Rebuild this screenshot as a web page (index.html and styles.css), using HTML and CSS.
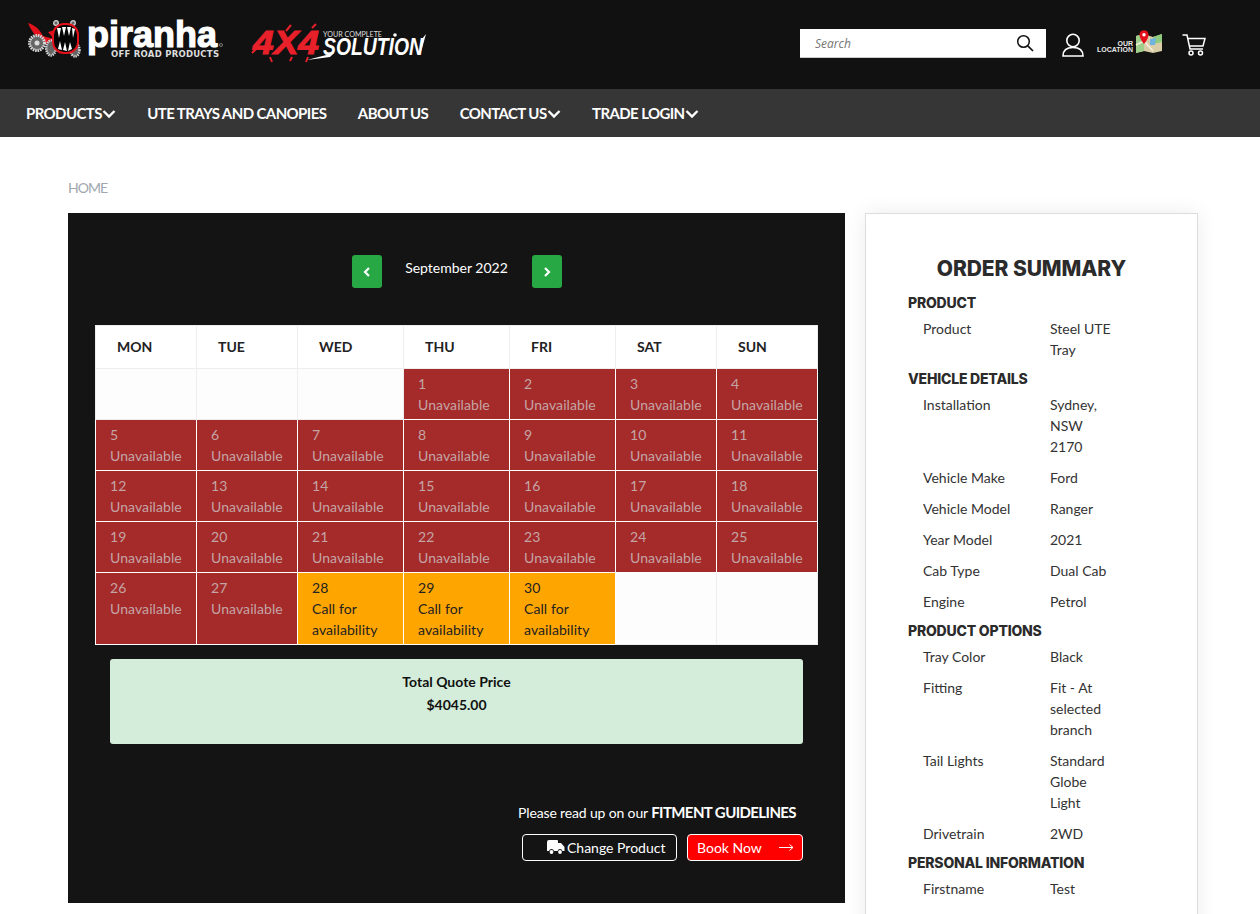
FILE: index.html
```html
<!DOCTYPE html>
<html lang="en">
<head>
<meta charset="utf-8">
<title>Piranha Off Road - Booking</title>
<link rel="stylesheet" href="styles.css">
</head>
<body>
<header class="topbar">
  <div class="logos">
    <svg class="logo-piranha" viewBox="0 -8 200 60" width="200" height="60" aria-label="Piranha Off Road Products">
      <path d="M2 7 C8 9 13 12 17 20 L28 23 L22 16 L33 13 L32 30 L17 27 C10 22 5 14 2 7 Z" fill="#e3111b"/>
      <g fill="#666" stroke="#d5d5d5">
        <circle cx="11" cy="27" r="7.500" stroke-width="3" stroke-dasharray="1.600 .8"/>
        <ellipse cx="25" cy="32" rx="4.800" ry="7.500" stroke-width="2.500" stroke-dasharray="1.400 .8"/>
        <ellipse cx="49" cy="34" rx="4.500" ry="6.500" stroke-width="2.500" stroke-dasharray="1.400 .8"/>
        <circle cx="30" cy="7" r="2.300" stroke-width="1.300"/>
        <circle cx="47" cy="7" r="2.300" stroke-width="1.300"/>
      </g>
      <circle cx="11" cy="27" r="2.500" fill="#ddd"/>
      <rect x="27" y="8" width="25" height="29" rx="11" fill="#050505" stroke="#e3111b" stroke-width="2"/>
      <path d="M31 12 L33 22 L35 12 Z M36 11 L38 20 L40 11 Z M41 11 L43 20 L45 11 Z M46 12 L47 22 L49 13 Z M32 33 L34 25 L36 34 Z M37 34 L39 26 L41 35 Z M42 35 L44 26 L46 33 Z" fill="#fff"/>
      <text class="lg-piranha" x="61" y="31" textLength="130" lengthAdjust="spacingAndGlyphs">piranha</text>
      <text class="lg-off" x="85" y="41" textLength="108" lengthAdjust="spacing">OFF ROAD PRODUCTS</text>
      <circle cx="195" cy="29" r="1.500" fill="none" stroke="#bbb" stroke-width=".6"/>
    </svg>
    <svg class="logo-solution" viewBox="0 -6 200 52" width="200" height="52" aria-label="4X4 Your Complete Solution">
      <text class="lg-4x4" x="3" y="30" textLength="66" lengthAdjust="spacingAndGlyphs">4X4</text>
      <path d="M7 24 L2 29 M36 7 L41 1 M20 33 L22 38 M58 33 L56 38 M42 33 L40 37 M62 4 L66 0" stroke="#e8202a" stroke-width="2"/>
      <text class="lg-your" x="73" y="13" textLength="59" lengthAdjust="spacingAndGlyphs">YOUR COMPLETE</text>
      <text class="lg-sol" x="73" y="31" textLength="100" lengthAdjust="spacingAndGlyphs">SOLUTION</text>
      <path d="M57 36 L84 29 L80 33 Z M172 15 L176 10 L171 28 Z" fill="#fff"/>
      <circle cx="145" cy="11" r="1.800" fill="#fff"/>
    </svg>
  </div>
  <div class="tools">
    <form class="search">
      <span class="search-label">Search</span>
      <svg class="search-icon" viewBox="0 0 18 18" width="18" height="18"><circle cx="7.500" cy="7.500" r="5.800" fill="none" stroke="#111" stroke-width="1.500"/><path d="M11.800 11.800 L17 17" stroke="#111" stroke-width="1.700"/></svg>
    </form>
    <svg class="ic-user" viewBox="0 0 22 24" width="22" height="24"><circle cx="11" cy="7.500" r="6.200" fill="none" stroke="#fff" stroke-width="1.600"/><path d="M1 23 C1 17 5 14.500 11 14.500 C17 14.500 21 17 21 23 Z" fill="none" stroke="#fff" stroke-width="1.600"/></svg>
    <div class="location">
      <div class="loc-text"><span>OUR</span><span>LOCATION</span></div>
      <svg viewBox="0 0 28 24" width="28" height="24"><path d="M1 6 L9 4 L18 7 L27 4 L27 21 L18 23 L9 21 L1 23 Z" fill="#d9cda8"/><path d="M1 6 L9 4 L9 21 L1 23 Z" fill="#9ed08c"/><path d="M18 7 L27 4 L27 12 L18 14 Z" fill="#8fcb7d"/><path d="M15 9 L21 8 L20 15 L15 15 Z" fill="#6fb4e0"/><path d="M1 15 L9 11 L18 21" stroke="#f5efdc" stroke-width="1.600" fill="none"/><path d="M9 14 C5 9 4.500 6.500 4.500 4.800 A4.500 4.500 0 0 1 13.500 4.800 C13.500 6.500 13 9 9 14 Z" fill="#e3101c"/><circle cx="9" cy="4.800" r="1.700" fill="#fff"/></svg>
    </div>
    <svg class="ic-cart" viewBox="0 0 24 22" width="24" height="22"><path d="M0.500 1 L5 1 L8 15 L21 15 M5.600 4.500 L23 4.500 L21 12 L7 12" fill="none" stroke="#fff" stroke-width="1.500"/><circle cx="9" cy="19" r="2" fill="none" stroke="#fff" stroke-width="1.500"/><circle cx="18.500" cy="19" r="2" fill="none" stroke="#fff" stroke-width="1.500"/></svg>
  </div>
</header>
<nav class="mainnav">
  <a>PRODUCTS<svg class="chev" viewBox="0 0 14 10" width="14" height="10"><path d="M1.500 2 L7 7.500 L12.500 2" fill="none" stroke="#fff" stroke-width="2.400"/></svg></a>
  <a>UTE TRAYS AND CANOPIES</a>
  <a>ABOUT US</a>
  <a>CONTACT US<svg class="chev" viewBox="0 0 14 10" width="14" height="10"><path d="M1.500 2 L7 7.500 L12.500 2" fill="none" stroke="#fff" stroke-width="2.400"/></svg></a>
  <a>TRADE LOGIN<svg class="chev" viewBox="0 0 14 10" width="14" height="10"><path d="M1.500 2 L7 7.500 L12.500 2" fill="none" stroke="#fff" stroke-width="2.400"/></svg></a>
</nav>
<main class="page">
  <div class="crumb">HOME</div>
  <div class="columns">
    <section class="booking">
      <div class="month">
        <button class="mbtn"><svg viewBox="0 0 8 10" width="8" height="10"><path d="M6 1 L2 5 L6 9" fill="none" stroke="#fff" stroke-width="2.200"/></svg></button>
        <span class="mname">September 2022</span>
        <button class="mbtn"><svg viewBox="0 0 8 10" width="8" height="10"><path d="M2 1 L6 5 L2 9" fill="none" stroke="#fff" stroke-width="2.200"/></svg></button>
      </div>
      <table class="cal">
        <colgroup><col class="c101"><col class="c101"><col class="c106"><col class="c106"><col class="c106"><col class="c101"><col class="c101"></colgroup>
        <thead><tr><th>MON</th><th>TUE</th><th>WED</th><th>THU</th><th>FRI</th><th>SAT</th><th>SUN</th></tr></thead>
        <tbody>
          <tr><td class="e"></td><td class="e"></td><td class="e"></td><td class="u">1<br>Unavailable</td><td class="u">2<br>Unavailable</td><td class="u">3<br>Unavailable</td><td class="u">4<br>Unavailable</td></tr>
          <tr><td class="u">5<br>Unavailable</td><td class="u">6<br>Unavailable</td><td class="u">7<br>Unavailable</td><td class="u">8<br>Unavailable</td><td class="u">9<br>Unavailable</td><td class="u">10<br>Unavailable</td><td class="u">11<br>Unavailable</td></tr>
          <tr><td class="u">12<br>Unavailable</td><td class="u">13<br>Unavailable</td><td class="u">14<br>Unavailable</td><td class="u">15<br>Unavailable</td><td class="u">16<br>Unavailable</td><td class="u">17<br>Unavailable</td><td class="u">18<br>Unavailable</td></tr>
          <tr><td class="u">19<br>Unavailable</td><td class="u">20<br>Unavailable</td><td class="u">21<br>Unavailable</td><td class="u">22<br>Unavailable</td><td class="u">23<br>Unavailable</td><td class="u">24<br>Unavailable</td><td class="u">25<br>Unavailable</td></tr>
          <tr><td class="u">26<br>Unavailable</td><td class="u">27<br>Unavailable</td><td class="o">28<br>Call for availability</td><td class="o">29<br>Call for availability</td><td class="o">30<br>Call for availability</td><td class="e"></td><td class="e"></td></tr>
        </tbody>
      </table>
      <div class="total"><strong>Total Quote Price</strong><strong>$4045.00</strong></div>
      <p class="fit">Please read up on our <b>FITMENT GUIDELINES</b></p>
      <div class="actions">
        <button class="btn-change"><svg viewBox="0 0 18 15" width="18" height="15"><path d="M0 2 Q0 0 2 0 L10 0 Q11 0 11 1 L11 3 L14 3 L17.500 7 L17.500 11 L15.500 11 A2.600 2.600 0 0 0 10.500 11 L7 11 A2.600 2.600 0 0 0 2 11 L0 11 Z" fill="#fff"/><circle cx="4.500" cy="12" r="1.900" fill="#fff"/><circle cx="13" cy="12" r="1.900" fill="#fff"/></svg>Change Product</button>
        <button class="btn-book">Book Now<svg viewBox="0 0 15 9" width="15" height="9"><path d="M0 4.500 L14 4.500 M10.500 1.500 L14 4.500 L10.500 7.500" fill="none" stroke="#fff" stroke-width="1"/></svg></button>
      </div>
    </section>
    <aside class="summary">
      <h2>ORDER SUMMARY</h2>
      <h3>PRODUCT</h3>
      <dl><dt>Product</dt><dd>Steel UTE Tray</dd></dl>
      <h3>VEHICLE DETAILS</h3>
      <dl><dt>Installation</dt><dd>Sydney, NSW 2170</dd></dl>
      <dl><dt>Vehicle Make</dt><dd>Ford</dd></dl>
      <dl><dt>Vehicle Model</dt><dd>Ranger</dd></dl>
      <dl><dt>Year Model</dt><dd>2021</dd></dl>
      <dl><dt>Cab Type</dt><dd>Dual Cab</dd></dl>
      <dl><dt>Engine</dt><dd>Petrol</dd></dl>
      <h3>PRODUCT OPTIONS</h3>
      <dl><dt>Tray Color</dt><dd>Black</dd></dl>
      <dl><dt>Fitting</dt><dd>Fit - At selected branch</dd></dl>
      <dl><dt>Tail Lights</dt><dd>Standard Globe Light</dd></dl>
      <dl><dt>Drivetrain</dt><dd>2WD</dd></dl>
      <h3>PERSONAL INFORMATION</h3>
      <dl><dt>Firstname</dt><dd>Test</dd></dl>
    </aside>
  </div>
</main>
</body>
</html>
```
FILE: styles.css
```css
* { box-sizing: border-box; }
html, body { margin: 0; height: 914px; overflow: hidden; }
body { font-family: Lato, "Liberation Sans", sans-serif; font-size: 14px; line-height: 21px; color: #333; background: #fff; }

.topbar { height: 89px; background: #111; display: flex; justify-content: space-between; padding: 8px 54px 0 26px; }
.logos { display: flex; align-items: flex-start; gap: 24px; }
.logo-solution { margin-top: 10px; }
.lg-piranha { font: 700 37px "Liberation Sans", sans-serif; fill: #fff; stroke: #fff; stroke-width: 1.2px; }
.lg-off { font: 700 8.5px "DejaVu Sans", sans-serif; fill: #ddd; }
.lg-4x4 { font: italic 700 33px "Liberation Sans", sans-serif; fill: #e8202a; stroke: #e8202a; stroke-width: 1px; }
.lg-your { font: 400 8px Lato, sans-serif; fill: #ddd; }
.lg-sol { font: italic 700 23px "Liberation Sans", sans-serif; fill: #fff; }

.tools { display: flex; align-items: flex-start; }
.search { width: 246px; height: 29px; margin-top: 21px; background: #fff; border-bottom: 1px solid #ccc; display: flex; align-items: center; justify-content: space-between; padding: 0 12px 0 15px; }
.search-label { font: italic 12px "Open Sans", sans-serif; color: #757575; }
.ic-user { margin: 25px 0 0 16px; }
.location { display: flex; align-items: flex-end; margin: 22px 0 0 12px; height: 24px; }
.loc-text { display: flex; flex-direction: column; align-items: flex-end; font: 700 7px/6px "Liberation Sans", sans-serif; color: #e8e8e8; margin: 0 2px 0 0; width: 37px; padding-bottom: 1px; }
.ic-cart { margin: 26px 0 0 19px; }

.mainnav { height: 48px; background: #363636; display: flex; align-items: center; gap: 31.5px; padding: 1px 0 0 26px; }
.mainnav a { color: #fff; font-weight: 700; font-size: 15px; letter-spacing: -.6px; display: flex; align-items: center; }

.page { padding: 40px 62px 0 68px; }
.crumb { color: #a0a7b0; font-size: 14px; line-height: 21px; letter-spacing: -1px; margin-bottom: 15px; }
.columns { display: flex; align-items: flex-start; gap: 20px; }

.booking { width: 777px; height: 690px; flex: none; background: #141414; padding: 42px 27px 0; }
.month { display: flex; justify-content: center; align-items: flex-start; gap: 23px; padding-left: 1px; }
.mbtn { width: 30px; height: 33px; padding: 0; border: 0; border-radius: 3px; background: #28a745; display: flex; align-items: center; justify-content: center; }
.mname { color: #fff; font-size: 14px; line-height: 21px; margin: 2px 1px 0 0; }

.cal { width: 722px; margin-top: 37px; border-collapse: collapse; table-layout: fixed; background: #fff; }
.c101 { width: 101px; }
.c106 { width: 106px; }
.cal th { height: 43px; padding: 0 0 2px 21px; text-align: left; font-size: 14px; font-weight: 700; color: #222; border: 1px solid #eee; }
.cal td { height: 51px; padding: 4px 14px; vertical-align: top; font-size: 14px; line-height: 21px; letter-spacing: .08px; border: 1px solid #fff; }
.cal td.e { background: #fdfdfd; border-color: #eee; }
.cal td.u { background: #a52a2a; color: #c4a5a5; }
.cal td.o { background: #ffa500; color: #222; }

.total { margin: 14px 15px 0; height: 85px; padding-top: 12px; background: #d4edda; border-radius: 3px; display: flex; flex-direction: column; align-items: center; gap: 2px; }
.total strong { color: #111; font-weight: 700; font-size: 14px; line-height: 21px; }

.fit { margin: 58px 22px 0 0; text-align: right; color: #fff; font-size: 14px; line-height: 21px; letter-spacing: -.15px; }
.fit b { font-size: 15px; letter-spacing: -.6px; }
.actions { display: flex; justify-content: flex-end; gap: 10px; margin: 11px 15px 0 0; }
.actions button { height: 27px; border-radius: 4px; border: 1px solid #fff; color: #fff; font: 14px Lato, sans-serif; display: flex; align-items: center; padding: 0; }
.actions .btn-change { width: 155px; background: transparent; padding-left: 24px; gap: 2px; }
.actions .btn-book { width: 116px; background: #f00; padding-left: 9px; gap: 17px; }

.summary { width: 333px; height: 760px; flex: none; background: #fff; border: 1px solid #ddd; box-shadow: 0 0 20px rgba(0, 0, 0, .08); padding: 40px 42px 0; }
.summary h2 { margin: 0 0 11px; font: 800 21px/29px Inter, sans-serif; letter-spacing: -.1px; color: #2b2b2b; text-align: center; }
.summary h3 { margin: -2px 0 5px; font: 800 14px/21px Inter, sans-serif; letter-spacing: -.2px; color: #2b2b2b; }
.summary dl { margin: 0 0 10px; padding-left: 15px; display: flex; }
.summary dt { width: 127px; flex: none; }
.summary dd { margin: 0; width: 66px; }
```
